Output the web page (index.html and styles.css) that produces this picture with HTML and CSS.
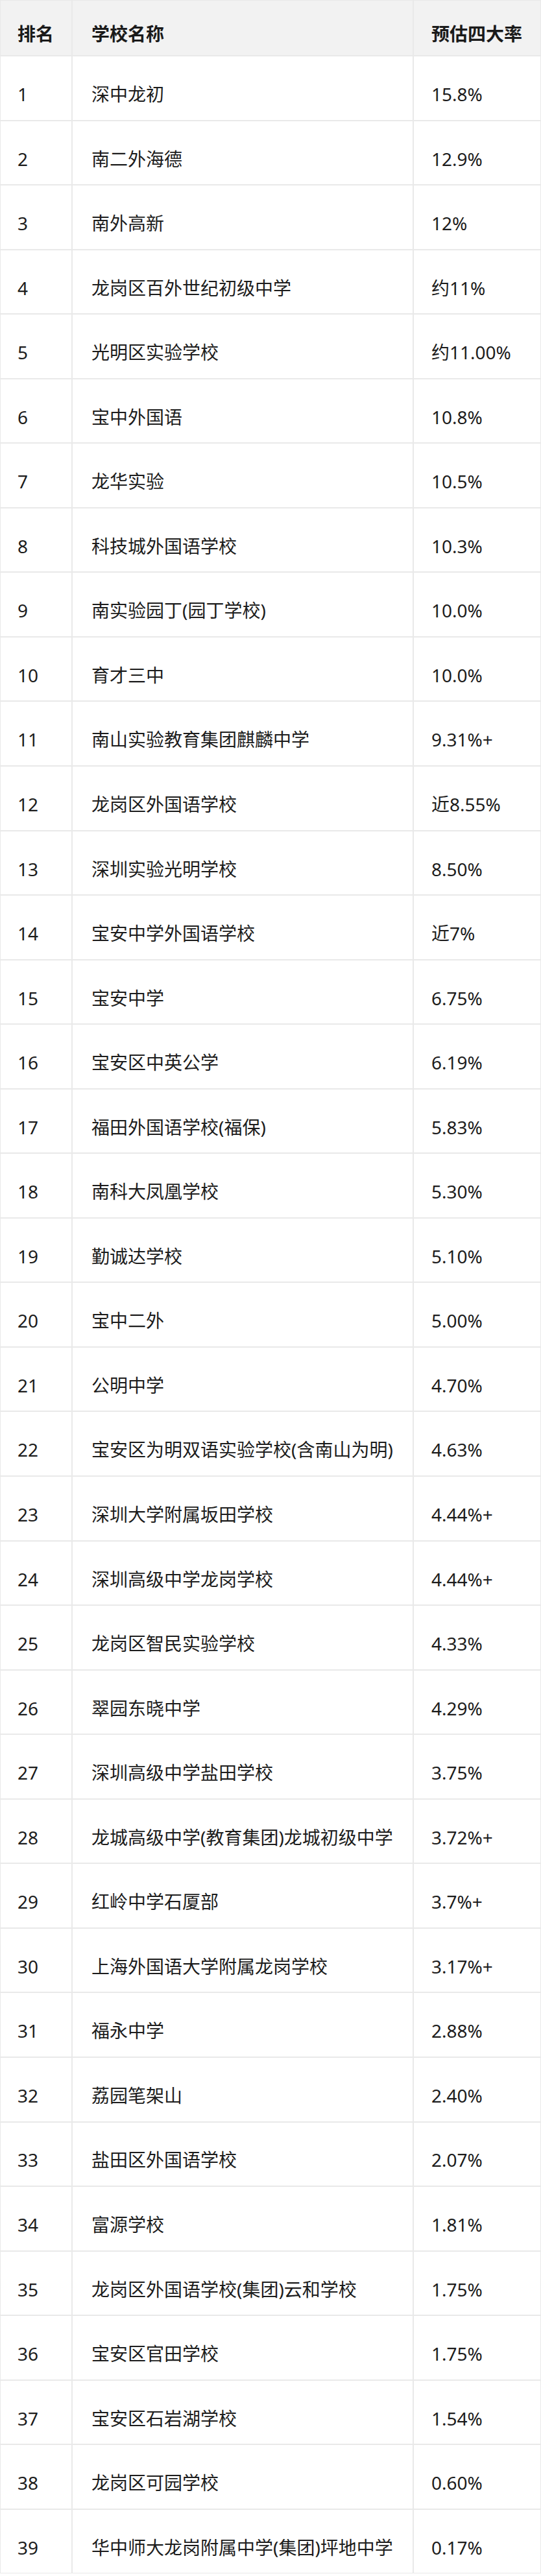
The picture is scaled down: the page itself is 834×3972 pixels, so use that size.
FILE: index.html
```html
<!DOCTYPE html>
<html lang="zh-CN">
<head>
<meta charset="utf-8">
<title>预估四大率排名</title>
<link rel="stylesheet" href="styles.css">
</head>
<body>
<div class="table">
  <div class="cell head c1">排名</div><div class="cell head c2">学校名称</div><div class="cell head c3">预估四大率</div>
  <div class="cell c1">1</div><div class="cell c2">深中龙初</div><div class="cell c3">15.8%</div>
  <div class="cell c1">2</div><div class="cell c2">南二外海德</div><div class="cell c3">12.9%</div>
  <div class="cell c1">3</div><div class="cell c2">南外高新</div><div class="cell c3">12%</div>
  <div class="cell c1">4</div><div class="cell c2">龙岗区百外世纪初级中学</div><div class="cell c3">约11%</div>
  <div class="cell c1">5</div><div class="cell c2">光明区实验学校</div><div class="cell c3">约11.00%</div>
  <div class="cell c1">6</div><div class="cell c2">宝中外国语</div><div class="cell c3">10.8%</div>
  <div class="cell c1">7</div><div class="cell c2">龙华实验</div><div class="cell c3">10.5%</div>
  <div class="cell c1">8</div><div class="cell c2">科技城外国语学校</div><div class="cell c3">10.3%</div>
  <div class="cell c1">9</div><div class="cell c2">南实验园丁(园丁学校)</div><div class="cell c3">10.0%</div>
  <div class="cell c1">10</div><div class="cell c2">育才三中</div><div class="cell c3">10.0%</div>
  <div class="cell c1">11</div><div class="cell c2">南山实验教育集团麒麟中学</div><div class="cell c3">9.31%+</div>
  <div class="cell c1">12</div><div class="cell c2">龙岗区外国语学校</div><div class="cell c3">近8.55%</div>
  <div class="cell c1">13</div><div class="cell c2">深圳实验光明学校</div><div class="cell c3">8.50%</div>
  <div class="cell c1">14</div><div class="cell c2">宝安中学外国语学校</div><div class="cell c3">近7%</div>
  <div class="cell c1">15</div><div class="cell c2">宝安中学</div><div class="cell c3">6.75%</div>
  <div class="cell c1">16</div><div class="cell c2">宝安区中英公学</div><div class="cell c3">6.19%</div>
  <div class="cell c1">17</div><div class="cell c2">福田外国语学校(福保)</div><div class="cell c3">5.83%</div>
  <div class="cell c1">18</div><div class="cell c2">南科大凤凰学校</div><div class="cell c3">5.30%</div>
  <div class="cell c1">19</div><div class="cell c2">勤诚达学校</div><div class="cell c3">5.10%</div>
  <div class="cell c1">20</div><div class="cell c2">宝中二外</div><div class="cell c3">5.00%</div>
  <div class="cell c1">21</div><div class="cell c2">公明中学</div><div class="cell c3">4.70%</div>
  <div class="cell c1">22</div><div class="cell c2">宝安区为明双语实验学校(含南山为明)</div><div class="cell c3">4.63%</div>
  <div class="cell c1">23</div><div class="cell c2">深圳大学附属坂田学校</div><div class="cell c3">4.44%+</div>
  <div class="cell c1">24</div><div class="cell c2">深圳高级中学龙岗学校</div><div class="cell c3">4.44%+</div>
  <div class="cell c1">25</div><div class="cell c2">龙岗区智民实验学校</div><div class="cell c3">4.33%</div>
  <div class="cell c1">26</div><div class="cell c2">翠园东晓中学</div><div class="cell c3">4.29%</div>
  <div class="cell c1">27</div><div class="cell c2">深圳高级中学盐田学校</div><div class="cell c3">3.75%</div>
  <div class="cell c1">28</div><div class="cell c2">龙城高级中学(教育集团)龙城初级中学</div><div class="cell c3">3.72%+</div>
  <div class="cell c1">29</div><div class="cell c2">红岭中学石厦部</div><div class="cell c3">3.7%+</div>
  <div class="cell c1">30</div><div class="cell c2">上海外国语大学附属龙岗学校</div><div class="cell c3">3.17%+</div>
  <div class="cell c1">31</div><div class="cell c2">福永中学</div><div class="cell c3">2.88%</div>
  <div class="cell c1">32</div><div class="cell c2">荔园笔架山</div><div class="cell c3">2.40%</div>
  <div class="cell c1">33</div><div class="cell c2">盐田区外国语学校</div><div class="cell c3">2.07%</div>
  <div class="cell c1">34</div><div class="cell c2">富源学校</div><div class="cell c3">1.81%</div>
  <div class="cell c1">35</div><div class="cell c2">龙岗区外国语学校(集团)云和学校</div><div class="cell c3">1.75%</div>
  <div class="cell c1">36</div><div class="cell c2">宝安区官田学校</div><div class="cell c3">1.75%</div>
  <div class="cell c1">37</div><div class="cell c2">宝安区石岩湖学校</div><div class="cell c3">1.54%</div>
  <div class="cell c1">38</div><div class="cell c2">龙岗区可园学校</div><div class="cell c3">0.60%</div>
  <div class="cell c1">39</div><div class="cell c2">华中师大龙岗附属中学(集团)坪地中学</div><div class="cell c3">0.17%</div>
</div>
</body>
</html>
```
FILE: styles.css
```css
html, body {
  margin: 0;
  padding: 0;
  background: #ffffff;
}
body {
  font-family: "Noto Sans", "Noto Sans CJK SC", sans-serif;
  color: #1c1c1c;
  min-height: 3972px;
}
.table {
  display: grid;
  grid-template-columns: 109px 524px 195px;
  grid-template-rows: 84px;
  grid-auto-rows: 97.55px;
  gap: 2px;
  padding: 1px;
  background: #e9e9e9;
  width: 834px;
  box-sizing: border-box;
}
.cell {
  background: #ffffff;
  display: flex;
  align-items: center;
  padding-top: 20px;
  box-sizing: border-box;
  font-size: 28px;
  line-height: 1.2;
  white-space: nowrap;
}
.head {
  background: #f2f2f2;
  font-weight: 700;
  color: #1a1a1a;
}
.c1 { padding-left: 26px; }
.c2 { padding-left: 29px; }
.c3 { padding-left: 27px; }
```
